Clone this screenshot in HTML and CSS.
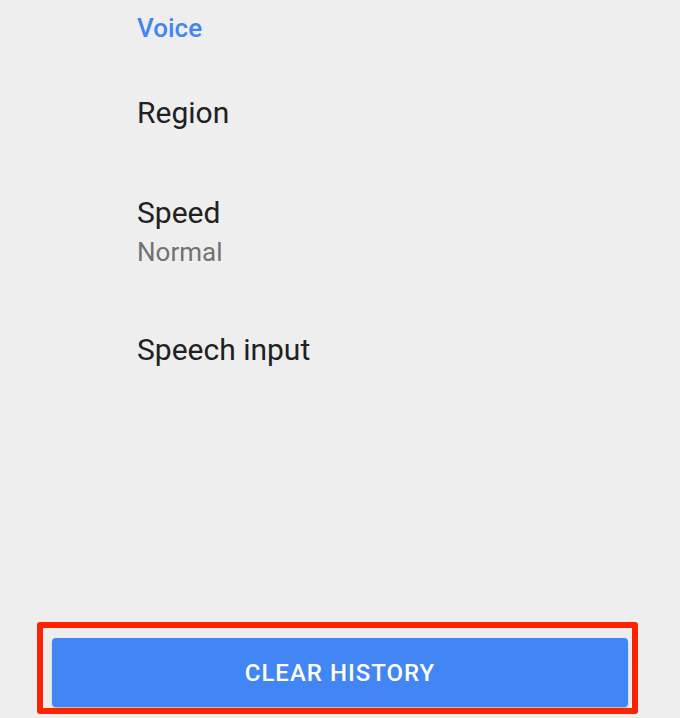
FILE: index.html
```html
<!DOCTYPE html>
<html>
<head>
<meta charset="utf-8">
<link rel="stylesheet" href="styles.css">
</head>
<body>
<div class="screen">
  <div class="settings">
    <div class="section-title">Voice</div>
    <div class="item item-region"><div class="item-title">Region</div></div>
    <div class="item item-speed">
      <div class="item-title">Speed</div>
      <div class="item-sub">Normal</div>
    </div>
    <div class="item item-speech"><div class="item-title">Speech input</div></div>
  </div>
  <div class="footer">
    <div class="highlight">
      <button class="clear-btn">CLEAR HISTORY</button>
    </div>
  </div>
</div>
</body>
</html>
```

FILE: styles.css
```css
html, body {
  margin: 0;
  padding: 0;
  background: #eeeeee;
}
.screen {
  width: 680px;
  height: 718px;
  overflow: hidden;
  display: flex;
  flex-direction: column;
  font-family: Roboto, "Liberation Sans", sans-serif;
}
.settings {
  padding: 13px 0 0 137px;
}
.section-title {
  font-size: 26px;
  line-height: 30px;
  font-weight: 500;
  color: #4285f4;
}
.item-title {
  font-size: 30px;
  line-height: 34px;
  color: #212121;
}
.item-sub {
  font-size: 26px;
  line-height: 30px;
  color: #727272;
  margin-top: 7px;
}
.item-region { margin-top: 53px; }
.item-speed { margin-top: 66px; }
.item-speech { margin-top: 66px; }
.footer {
  margin-top: auto;
  padding: 0 0 4px 37px;
}
.highlight {
  box-sizing: border-box;
  width: 601px;
  height: 92px;
  border: 6px solid #ff2200;
  border-radius: 3px;
  padding: 10px 4px 1px 9px;
  display: flex;
}
.clear-btn {
  flex: 1;
  border: none;
  border-radius: 4px;
  background: #4285f4;
  color: #ffffff;
  font-family: Roboto, "Liberation Sans", sans-serif;
  font-weight: 500;
  font-size: 24px;
  letter-spacing: 1px;
  box-shadow: 0 1px 2px rgba(0,0,0,0.25);
  padding: 0;
  margin: 0;
}
```
